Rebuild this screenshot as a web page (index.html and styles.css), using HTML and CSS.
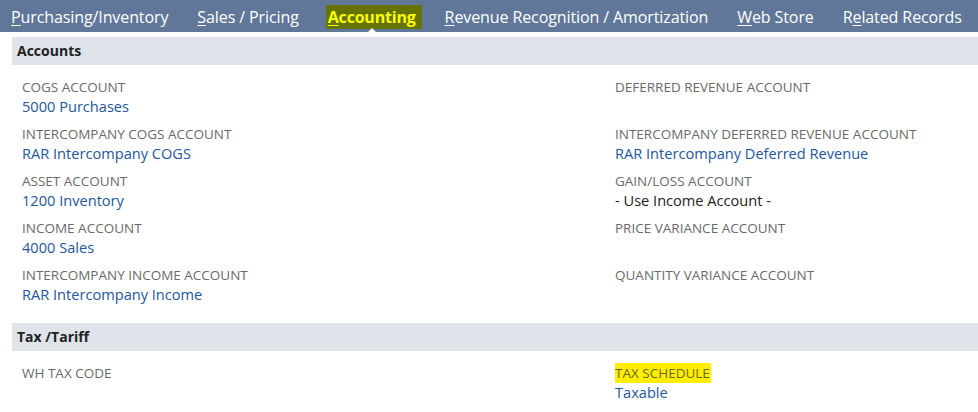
FILE: index.html
```html
<!DOCTYPE html>
<html lang="en">
<head>
  <meta charset="UTF-8">
  <title>Item - Accounting</title>
  <link rel="stylesheet" href="styles.css">
</head>
<body>

  <div class="tabs">
    <a class="tab"><u>P</u>urchasing/Inventory</a>
    <a class="tab"><u>S</u>ales / Pricing</a>
    <a class="tab active"><span class="mark"><u>A</u>ccounting</span></a>
    <a class="tab"><u>R</u>evenue Recognition / Amortization</a>
    <a class="tab"><u>W</u>eb Store</a>
    <a class="tab">R<u>e</u>lated Records</a>
  </div>

  <div class="section">
    <div class="section-title">Accounts</div>
    <div class="fields">
      <div class="col">
        <div class="field">
          <div class="label">COGS Account</div>
          <div class="value link">5000 Purchases</div>
        </div>
        <div class="field">
          <div class="label">Intercompany COGS Account</div>
          <div class="value link">RAR Intercompany COGS</div>
        </div>
        <div class="field">
          <div class="label">Asset Account</div>
          <div class="value link">1200 Inventory</div>
        </div>
        <div class="field">
          <div class="label">Income Account</div>
          <div class="value link">4000 Sales</div>
        </div>
        <div class="field">
          <div class="label">Intercompany Income Account</div>
          <div class="value link">RAR Intercompany Income</div>
        </div>
      </div>
      <div class="col">
        <div class="field">
          <div class="label">Deferred Revenue Account</div>
          <div class="value"></div>
        </div>
        <div class="field">
          <div class="label">Intercompany Deferred Revenue Account</div>
          <div class="value link">RAR Intercompany Deferred Revenue</div>
        </div>
        <div class="field">
          <div class="label">Gain/Loss Account</div>
          <div class="value">- Use Income Account -</div>
        </div>
        <div class="field">
          <div class="label">Price Variance Account</div>
          <div class="value"></div>
        </div>
        <div class="field">
          <div class="label">Quantity Variance Account</div>
          <div class="value"></div>
        </div>
      </div>
    </div>
  </div>

  <div class="section">
    <div class="section-title">Tax /Tariff</div>
    <div class="fields">
      <div class="col">
        <div class="field">
          <div class="label">WH Tax Code</div>
          <div class="value"></div>
        </div>
      </div>
      <div class="col">
        <div class="field">
          <div class="label"><span class="hl">Tax Schedule</span></div>
          <div class="value link">Taxable</div>
        </div>
      </div>
    </div>
  </div>

</body>
</html>
```

FILE: styles.css
```css
body {
  margin: 0;
  font-family: "Open Sans", sans-serif;
  background: #fff;
  color: #222;
}
.tabs {
  display: flex;
  align-items: center;
  gap: 29px;
  height: 32px;
  padding-left: 11px;
  background: #607799;
}
.tab {
  color: #fff;
  font-size: 16px;
  line-height: 20px;
  letter-spacing: -0.1px;
  white-space: nowrap;
  position: relative;
  top: 1px;
}
.tab u {
  text-underline-offset: 2px;
}
.tab.active {
  font-weight: bold;
  color: #ffff00;
  letter-spacing: -0.2px;
}
.tab.active .mark {
  background: #657400;
  padding: 1px 6px 1px 2px;
  margin: 0 -6px 0 -2px;
}
.tab.active::after {
  content: "";
  position: absolute;
  left: 50%;
  bottom: -7px;
  margin-left: -6px;
  border: 6px solid transparent;
  border-bottom-color: #fff;
  border-top: 0;
}
.section {
  padding-left: 12px;
}
.section-title {
  margin-top: 5px;
  height: 28px;
  line-height: 28px;
  padding-left: 5px;
  background: #dfe4eb;
  font-size: 14px;
  font-weight: bold;
  color: #222;
}
.fields {
  display: flex;
  padding: 13px 0 10px 10px;
}
.section + .section .section-title {
  margin-top: 0;
}
.col {
  width: 593px;
}
.col + .col {
  flex: 1;
}
.field {
  height: 47px;
}
.label {
  font-size: 13.5px;
  line-height: 18px;
  text-transform: uppercase;
  color: #6a6a6a;
}
.hl {
  background: #ffee00;
  color: #6e6a10;
  padding: 1px 1px 1px 0;
}
.value {
  font-size: 14.6px;
  line-height: 20px;
  color: #222;
}
.value.link {
  color: #24569b;
}
```
